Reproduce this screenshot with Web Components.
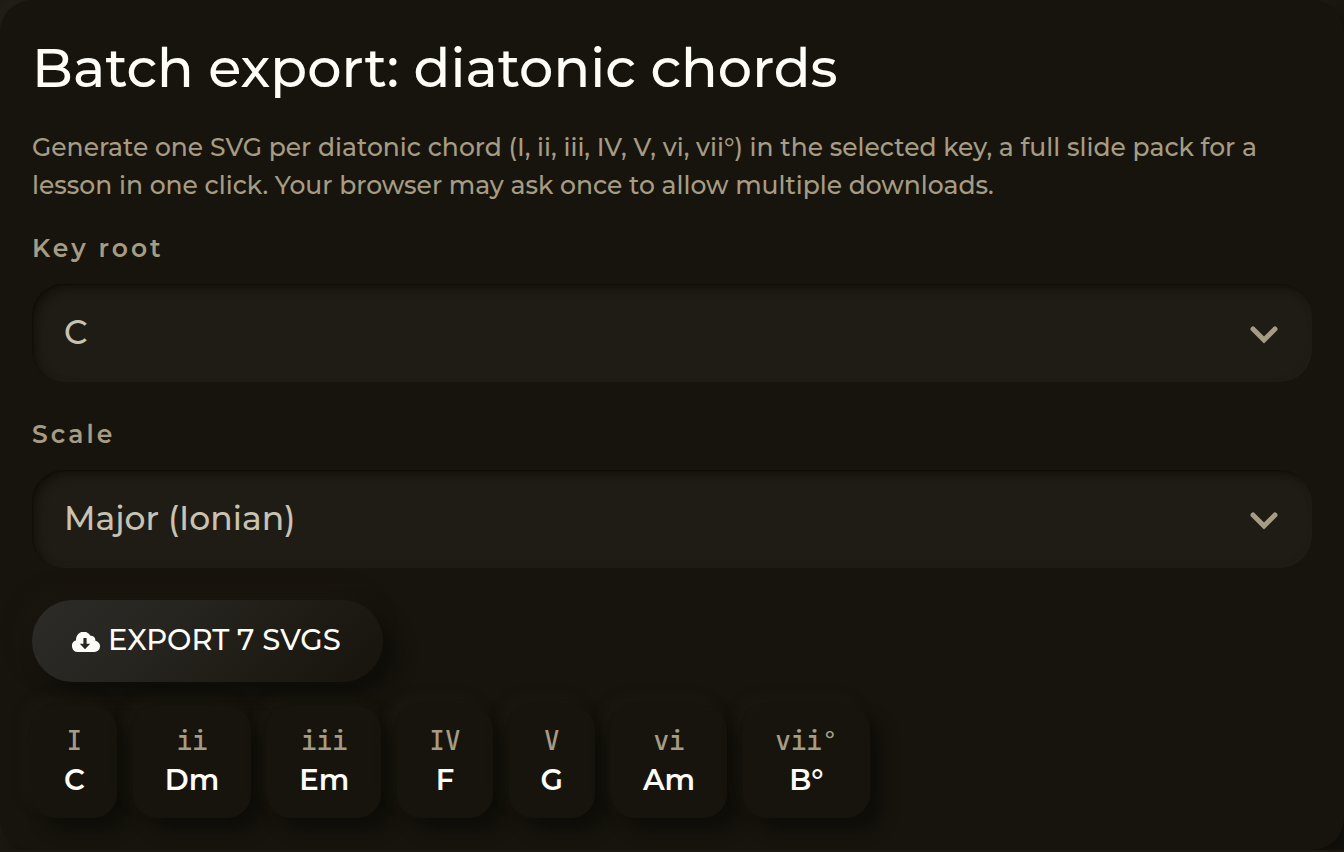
<!DOCTYPE html>
<html lang="en">
<head>
<meta charset="utf-8">
<meta name="viewport" content="width=device-width, initial-scale=1">
<title>Batch export: diatonic chords</title>
<style>
  html { background: #1b1812; }
  body {
    margin: 0;
    font-family: Montserrat, Inter, sans-serif;
    color: #fffdf8;
    --surface: #17140d;
    --field: #1f1c15;
    --muted: #a69c84;
    --shade: #0e0d08;
    --glow: rgba(70, 66, 56, 0.08);
  }
</style>
</head>
<body>
<export-panel>
  <span slot="title">Batch export: diatonic chords</span>
  <span slot="intro">Generate one SVG per diatonic chord (I, ii, iii, IV, V, vi, vii°) in the selected key, a full slide pack for a lesson in one click. Your browser may ask once to allow multiple downloads.</span>
  <select-field label="Key root" options="C|D|E|F|G|A|B"></select-field>
  <select-field label="Scale" options="Major (Ionian)|Natural minor (Aeolian)"></select-field>
  <export-button>EXPORT 7 SVGS</export-button>
  <chord-list>
    <chord-card numeral="I">C</chord-card>
    <chord-card numeral="ii">Dm</chord-card>
    <chord-card numeral="iii">Em</chord-card>
    <chord-card numeral="IV">F</chord-card>
    <chord-card numeral="V">G</chord-card>
    <chord-card numeral="vi">Am</chord-card>
    <chord-card numeral="vii°">B°</chord-card>
  </chord-list>
</export-panel>
<script>
  class ShadowElement extends HTMLElement {
    constructor() {
      super();
      this.attachShadow({ mode: "open" });
    }
    render(html) { this.shadowRoot.innerHTML = html; }
  }

  customElements.define("export-panel", class extends ShadowElement {
    connectedCallback() {
      this.render(`
        <style>
          :host { display: block; }
          section {
            padding: 32px;
            border-radius: 32px;
            background: var(--surface);
            box-shadow: 12px 12px 24px var(--shade), -12px -12px 24px #24211b;
          }
          h1 { margin: 0; font-size: 54px; line-height: 72px; font-weight: 500; }
          p { margin: 24px 0; font-size: 25px; line-height: 38px; font-weight: 500; color: var(--muted); }
          .body { display: flex; flex-direction: column; }
        </style>
        <section>
          <h1><slot name="title"></slot></h1>
          <p><slot name="intro"></slot></p>
          <div class="body"><slot></slot></div>
        </section>`);
    }
  });

  customElements.define("select-field", class extends ShadowElement {
    connectedCallback() {
      this.render(`
        <style>
          :host { display: block; margin-bottom: 32px; }
          label {
            display: block; margin-bottom: 16px;
            font-size: 25px; line-height: 40px; font-weight: 600;
            letter-spacing: 3px; color: var(--muted);
          }
          .box { display: grid; align-items: center; }
          .box > * { grid-area: 1 / 1; }
          select {
            appearance: none; width: 100%; height: 98px; margin: 0;
            padding: 0 80px 2px 32px; border: 0; border-radius: 32px;
            background: var(--field); color: #c8c2b3;
            font: 500 33px/48px Montserrat, Inter, sans-serif;
            box-shadow: inset 1px 1px 1px #100e09, inset 5px 5px 8px #15120c, inset -2px -2px 4px #211e18;
          }
          svg { justify-self: end; width: 28px; height: 18px; margin: 4px 34px 0 0; pointer-events: none; }
        </style>
        <label for="field"></label>
        <div class="box">
          <select id="field"></select>
          <svg viewBox="0 0 28 18" fill="none" stroke="#a69c84" stroke-width="5" stroke-linecap="round" aria-hidden="true"><path d="M3 3l11 11L25 3"/></svg>
        </div>`);
      this.shadowRoot.querySelector("label").textContent = this.getAttribute("label");
      const select = this.shadowRoot.querySelector("select");
      for (const name of this.getAttribute("options").split("|")) select.add(new Option(name));
    }
  });

  customElements.define("export-button", class extends ShadowElement {
    connectedCallback() {
      this.render(`
        <style>
          :host { display: flex; margin-bottom: 24px; }
          button {
            display: flex; align-items: center; gap: 8px;
            height: 82px; padding: 0 42px 2px 40px; border: 0; border-radius: 41px;
            background: linear-gradient(135deg, #2c2b27 0%, #272520 35%, #1e1b14 70%, #17140d 100%);
            color: #fffdf8; font: 500 29px/40px Montserrat, Inter, sans-serif;
            box-shadow: 12px 12px 20px var(--shade), -8px -8px 20px #1a1710;
          }
          svg { width: 28px; height: 20px; margin-top: 4px; }
        </style>
        <button type="button">
          <svg viewBox="0 0 28 20" aria-hidden="true"><path fill="#fffdf8" fill-rule="evenodd" d="M6 20a6 6 0 0 1-1.900-11.700A7.700 7.700 0 0 1 18.500 3.700a4.700 4.700 0 0 1 4.900 5A5.700 5.700 0 0 1 22.300 20ZM11.400 6v5.800H7.800L13 17.200l5.200-5.400h-3.600V6Z"/></svg>
          <span><slot></slot></span>
        </button>`);
    }
  });

  customElements.define("chord-list", class extends ShadowElement {
    connectedCallback() {
      this.render(`
        <style>:host { display: flex; flex-wrap: wrap; gap: 16px; }</style>
        <slot></slot>`);
    }
  });

  customElements.define("chord-card", class extends ShadowElement {
    connectedCallback() {
      this.render(`
        <style>
          :host {
            display: flex; flex-direction: column; align-items: center;
            padding: 16px 32px 18px; border-radius: 24px; background: var(--surface);
            box-shadow: 12px 12px 16px var(--shade), -8px -8px 18px var(--glow);
          }
          .numeral {
            font: 500 26px/38px "JetBrains Mono", "Liberation Mono", monospace;
            color: var(--muted);
          }
          .name { font-size: 29px; line-height: 40px; font-weight: 600; }
        </style>
        <span class="numeral"></span>
        <span class="name"><slot></slot></span>`);
      this.shadowRoot.querySelector(".numeral").textContent = this.getAttribute("numeral");
    }
  });
</script>
</body>
</html>
